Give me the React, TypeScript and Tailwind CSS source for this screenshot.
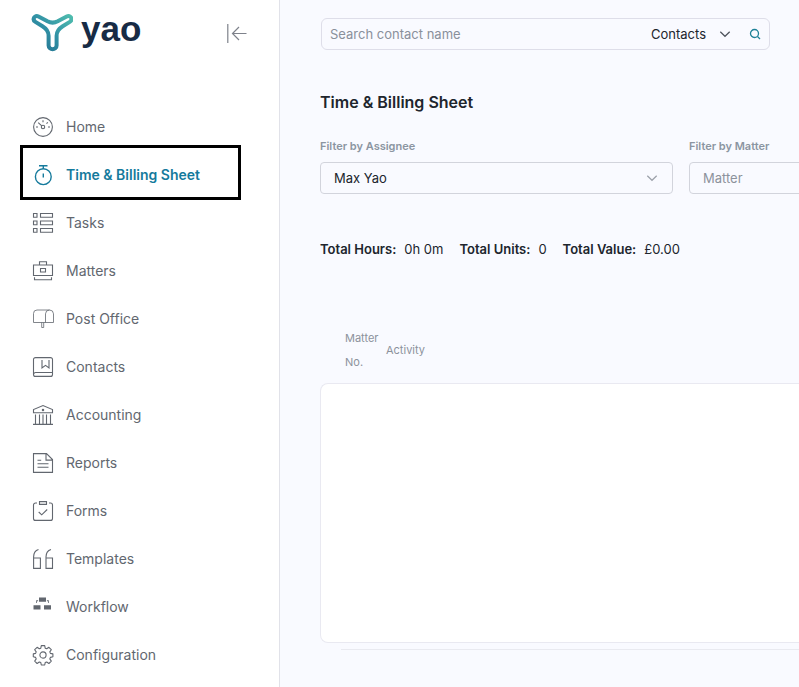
import type { ReactNode } from "react";

const icons: Record<string, ReactNode> = {
  home: (
    <>
      <circle cx="10" cy="10" r="9.4" />
      <circle cx="10" cy="10" r="1.7" />
      <path d="M8.8 8.8 5.2 5.6M10 3.2v2M14.8 5.4l-1.3 1.3M3 10h2M15 10h2" />
    </>
  ),
  timer: (
    <g strokeWidth="1.4">
      <circle cx="10.3" cy="11.7" r="7.9" />
      <path d="M6 .8h8.500M10.300.8v3M10.300 8.500v4" />
    </g>
  ),
  tasks: (
    <path d="M.5.5H4v3.7H.5zM7.5.5h12v3.7h-12zM.5 8H4v3.7H.5zM7.5 8h12v3.7h-12zM.5 15.5H4v3.7H.5zM7.5 15.5h12v3.7h-12z" />
  ),
  matters: (
    <path d="M.5 4h19v10.5H.5zM6.5 4V.8h7V4M7.5 7.5h5v3.5h-5zM1.5 16.2v2.6h17v-2.6" />
  ),
  post: (
    <g strokeWidth=".8">
      <path d="M4 1h12.500M.5 13.500V4.500A3.500 3.500 0 0 1 4 1M.5 13.500h20V4.800A4 4 0 0 0 16.500 1a4 4 0 0 0-4 3.800v8.700M8.700 13.500v5h2v-5" />
    </g>
  ),
  contacts: (
    <path d="M2.500.6h15a2 2 0 0 1 2 2v14.800a2 2 0 0 1-2 2h-15a2 2 0 0 1-2-2V2.600a2 2 0 0 1 2-2zM.7 17.300a2 2 0 0 1 2-1.800h16.600M9 3v8l3.500-2.600L16 11V3" />
  ),
  accounting: (
    <>
      <path d="M.5 7.700V4.500L10 .6l9.500 3.900v3.200zM0 19.400h20" />
      <path d="M2.500 9.500v9.500M6.500 9.500v9.500M10 9.500v9.500M13.500 9.500v9.500M17.500 9.500v9.500" />
      <circle cx="10" cy="5" r=".7" fill="currentColor" />
    </>
  ),
  reports: (
    <path d="M.5.6h13l6 6v12.800H.5zM13 .8v6.300h6M4.500 7.300h3.700M4.500 10.700h11M4.500 14.200h11" />
  ),
  forms: (
    <path d="M4 2H2.500a2 2 0 0 0-2 2v13.400a2 2 0 0 0 2 2h15a2 2 0 0 0 2-2V4a2 2 0 0 0-2-2H16M6.500.6h7v2.800h-7zM5.700 11l3 2.800 5.500-5.300" />
  ),
  templates: (
    <path d="M5.500.5C2 1.500.6 4.500.6 8v11.400h6.800V9H.6M18 .5C14.500 1.500 13 4.500 13 8v11.400h6.500V9H13" />
  ),
  workflow: (
    <g fill="currentColor" stroke="none">
      <path d="M6 .5h7v4.300H6zM.5 8.300h7v4.200h-7zM11 8.300h7v4.200h-7z" />
      <path d="M3.200 3.300h1.900v1H4V6h-.8zM13.900 3.300h1.900V6H15V4.300h-1.100z" />
    </g>
  ),
  config: (
    <>
      <circle cx="10" cy="10" r="3.100" />
      <path
        strokeLinejoin="round"
        d="M8.300.6h3.400l.5 2.600 1.500.6 2.200-1.500 2.400 2.400-1.500 2.200.6 1.500 2.500.5v2.900l-2.500.6-.6 1.500 1.500 2.200-2.400 2.400-2.200-1.500-1.500.6-.5 2.400H8.300l-.5-2.400-1.500-.6-2.200 1.500-2.400-2.400 1.500-2.200-.6-1.500-2.300-.6V8.900l2.300-.5.6-1.500-1.500-2.200 2.400-2.400 2.200 1.500 1.500-.6z"
      />
    </>
  ),
};

const items = [
  ["home", "Home"],
  ["timer", "Time & Billing Sheet"],
  ["tasks", "Tasks"],
  ["matters", "Matters"],
  ["post", "Post Office"],
  ["contacts", "Contacts"],
  ["accounting", "Accounting"],
  ["reports", "Reports"],
  ["forms", "Forms"],
  ["templates", "Templates"],
  ["workflow", "Workflow"],
  ["config", "Configuration"],
];

function NavItem({ icon, label }: { icon: string; label: string }) {
  const active = icon === "timer";
  return (
    <li className="relative">
      <a
        href="#"
        aria-current={active ? "page" : undefined}
        className={`flex h-12 items-center gap-3 pl-8 text-sm ${
          active ? "font-semibold text-[#157a9c]" : "text-[#62676f]"
        }`}
      >
        <svg
          viewBox="-.5 0 21 20"
          className="h-5 w-[22px] shrink-0 overflow-visible"
          fill="none"
          stroke="currentColor"
          strokeWidth="1.1"
          aria-hidden="true"
        >
          {icons[icon]}
        </svg>
        {label}
      </a>
      {active && (
        <span className="pointer-events-none absolute -top-1.5 left-5 h-[55px] w-[221px] border-3 border-black" />
      )}
    </li>
  );
}

function Chevron({ className }: { className: string }) {
  return (
    <svg
      viewBox="0 0 12 12"
      className={`pointer-events-none h-3 w-3 ${className}`}
      fill="none"
      stroke="currentColor"
      strokeWidth="1.2"
      aria-hidden="true"
    >
      <path d="M1.300 3.800 6 8.300l4.700-4.500" />
    </svg>
  );
}

function Total({ label, value }: { label: string; value: string }) {
  return (
    <div className="flex gap-2">
      <dt className="font-semibold">{label}</dt>
      <dd>{value}</dd>
    </div>
  );
}

export default function App() {
  return (
    <div className="flex min-h-screen overflow-hidden bg-[#f9faff] font-[Inter,sans-serif] text-[#20252d]">
      <aside className="w-[280px] shrink-0 border-r border-[#e1e2e9] bg-white">
        <div className="flex h-[103px] items-start justify-between pt-3 pr-8 pl-[31px]">
          <div className="flex gap-2">
            <svg viewBox="0 0 42 40" className="h-10 w-[42px]" fill="none" aria-hidden="true">
              <defs>
                <linearGradient id="brand" x1="0" y1="1" x2="1" y2="0">
                  <stop offset="0" stopColor="#23708f" />
                  <stop offset=".5" stopColor="#3191a5" />
                  <stop offset="1" stopColor="#4fbcae" />
                </linearGradient>
              </defs>
              <path
                d="M7.500 4.400C3.600 2.300.8 7.600 4.400 9.900l7.100 4.400c4.500 2.800 6.100 5 6.100 9.500v9.800c0 4.800 8 4.800 8 0v-9.800c0-4.500 1.600-6.700 6.100-9.500l7.100-4.400c3.600-2.300.8-7.600-3.100-5.500l-9 4.900c-3.500 1.800-6.700 1.800-10.200 0z"
                stroke="url(#brand)"
                strokeWidth="4"
                strokeLinejoin="round"
              />
            </svg>
            <span className="font-['Liberation_Sans',sans-serif] text-[35px] leading-[34px] font-bold text-[#172b45]">
              yao
            </span>
          </div>
          <button type="button" aria-label="Collapse menu" className="mt-3 text-[#7e828b]">
            <svg viewBox="0 0 20 20" className="h-5 w-5" fill="none" stroke="currentColor" strokeWidth="1.200">
              <path d="M.8 0v19M19.500 9.500H6M12 3 5.500 9.500 12 16" />
            </svg>
          </button>
        </div>
        <nav aria-label="Main">
          <ul>
            {items.map(([icon, label]) => (
              <NavItem key={icon} icon={icon} label={label} />
            ))}
          </ul>
        </nav>
      </aside>

      <main className="min-w-0 flex-1 overflow-hidden pt-[18px] pl-10">
        <form className="mr-[29px] ml-px flex h-8 items-center rounded-md border border-[#dedee9] pr-1.5 text-[13px]">
          <input
            type="text"
            aria-label="Search contact name"
            placeholder="Search contact name"
            className="h-full min-w-0 flex-1 bg-transparent pl-2 outline-none placeholder:text-[#89909b]"
          />
          <div className="relative flex items-center">
            <select
              aria-label="Search in"
              className="h-[30px] w-20 appearance-none bg-transparent pt-0.5 outline-none"
            >
              <option>Contacts</option>
            </select>
            <Chevron className="absolute right-0 text-[#4d535c]" />
          </div>
          <button type="submit" aria-label="Search" className="ml-4 p-0.5 text-[#1d8197]">
            <svg viewBox="0 0 12 12" className="h-3 w-3" fill="none" stroke="currentColor" strokeWidth="1.300">
              <circle cx="5.500" cy="5.500" r="4" />
              <path d="m8.500 8.500 2.500 2.500" />
            </svg>
          </button>
        </form>

        <h1 className="mt-10 text-base leading-6 font-semibold">Time &amp; Billing Sheet</h1>

        <div className="mt-6 flex gap-4">
          <div className="w-[353px] shrink-0">
            <label htmlFor="assignee" className="block text-[11px] leading-4 font-semibold text-[#8b95a1]">
              Filter by Assignee
            </label>
            <div className="relative mt-2 flex items-center">
              <select
                id="assignee"
                className="h-8 w-full appearance-none rounded border border-[#d2d4dc] bg-transparent px-[13px] pt-0.5 text-[13px] outline-none"
              >
                <option>Max Yao</option>
              </select>
              <Chevron className="absolute right-[15px] text-[#9ca1aa]" />
            </div>
          </div>
          <div className="w-[353px] shrink-0">
            <label htmlFor="matter" className="block text-[11px] leading-4 font-semibold text-[#8b95a1]">
              Filter by Matter
            </label>
            <input
              id="matter"
              type="text"
              placeholder="Matter"
              className="mt-2 block h-8 w-full rounded border border-[#d2d4dc] bg-transparent px-[13px] text-[13px] outline-none placeholder:text-[#8c929c]"
            />
          </div>
        </div>

        <dl className="mt-[45px] flex gap-4 text-[13px] leading-5">
          <Total label="Total Hours:" value="0h 0m" />
          <Total label="Total Units:" value="0" />
          <Total label="Total Value:" value="£0.00" />
        </dl>

        <table className="mt-[67px] ml-[25px] text-[11px] leading-6 text-[#8c929c]">
          <thead>
            <tr>
              <th scope="col" className="w-[41px] p-0 text-left font-normal">
                Matter
                <br />
                No.
              </th>
              <th scope="col" className="p-0 text-left font-normal">
                Activity
              </th>
            </tr>
          </thead>
        </table>
        <section aria-label="Entries" className="mt-[9px] h-[260px] rounded-l-lg border border-r-0 border-[#e9e9f1] bg-white" />
        <hr className="mt-1.5 ml-[21px] border-[#e9eaf0]" />
      </main>
    </div>
  );
}
